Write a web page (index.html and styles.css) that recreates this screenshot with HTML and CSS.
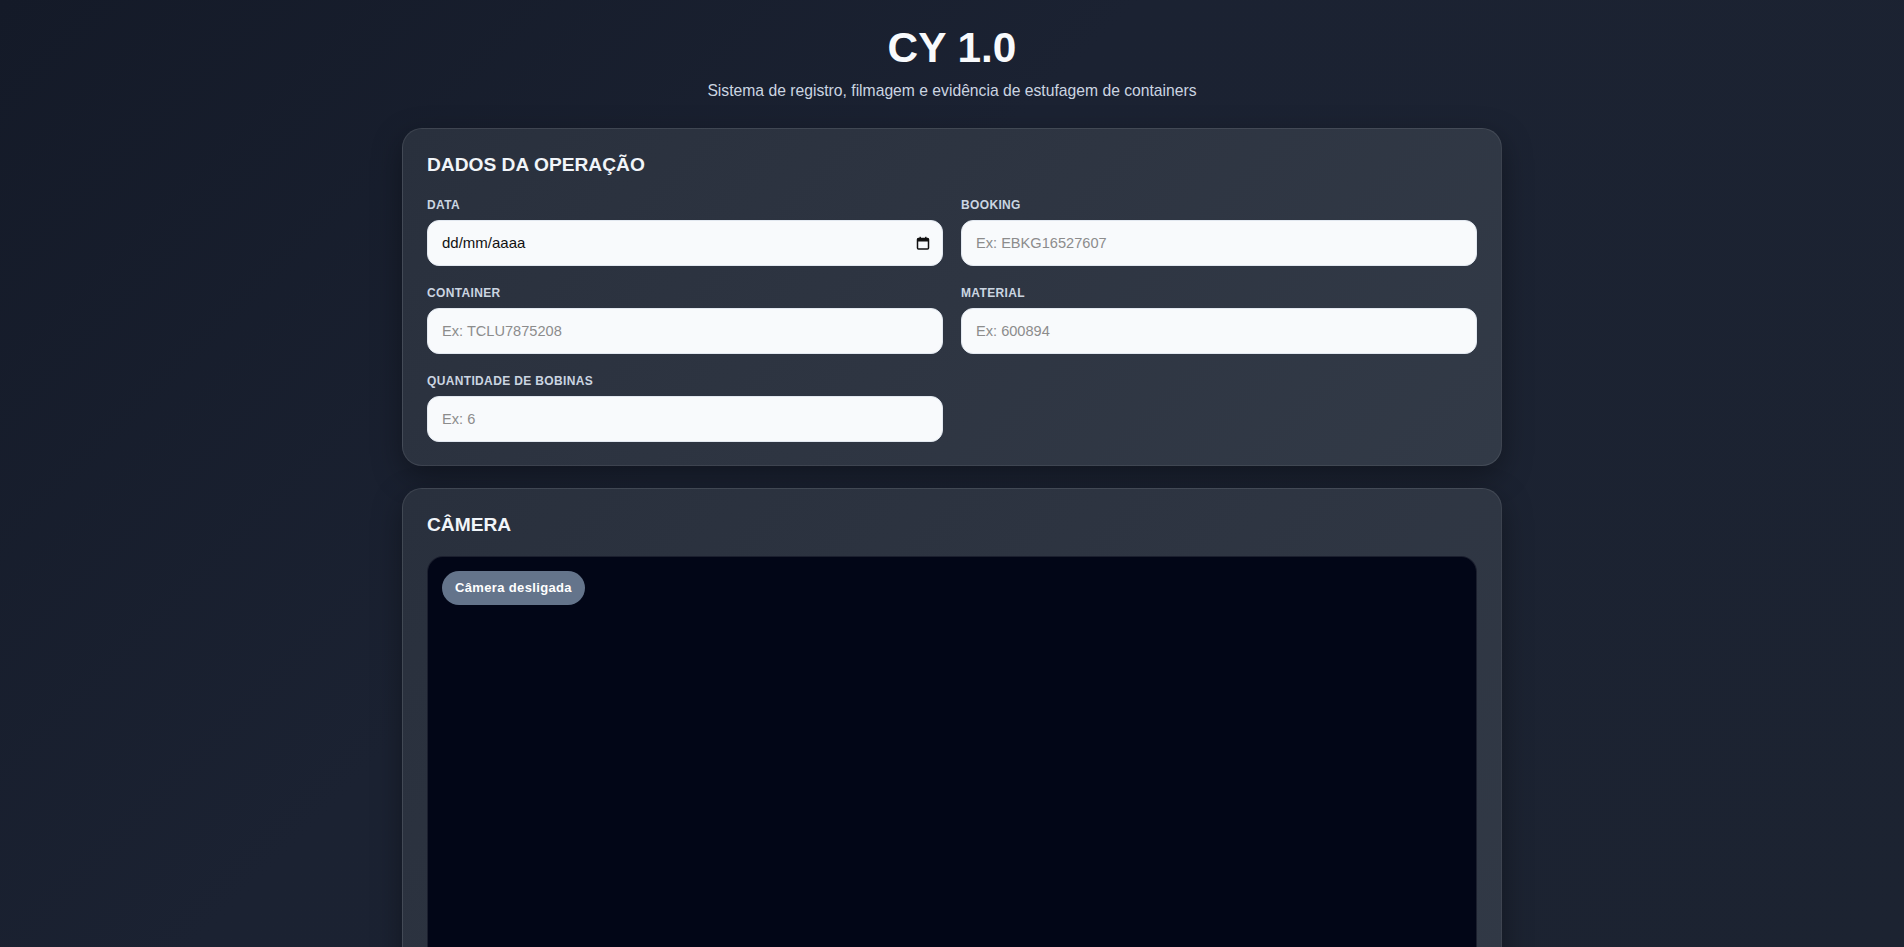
FILE: index.html
```html
<!DOCTYPE html>
<html lang="pt-BR">
<head>
<meta charset="utf-8">
<title>CY 1.0</title>
<link rel="stylesheet" href="styles.css">
</head>
<body>
<header class="header">
  <h1 class="title">CY 1.0</h1>
  <p class="subtitle">Sistema de registro, filmagem e evidência de estufagem de containers</p>
</header>
<main class="container">
  <section class="card">
    <h2 class="card-title">DADOS DA OPERAÇÃO</h2>
    <div class="form-grid">
      <div class="field">
        <label class="label">DATA</label>
        <div class="input date-input">
          <span class="date-text">dd/mm/aaaa</span>
          <svg class="cal-icon" width="14" height="14" viewBox="0 0 14 14" aria-hidden="true">
            <rect x="1.5" y="2.5" width="11" height="10.5" rx="1" fill="none" stroke="#111" stroke-width="1.5"/>
            <rect x="1.5" y="2.5" width="11" height="3" fill="#111"/>
            <rect x="3.5" y="0.8" width="1.4" height="2.5" fill="#111"/>
            <rect x="9.1" y="0.8" width="1.4" height="2.5" fill="#111"/>
          </svg>
        </div>
      </div>
      <div class="field">
        <label class="label">BOOKING</label>
        <input class="input" type="text" placeholder="Ex: EBKG16527607">
      </div>
      <div class="field">
        <label class="label">CONTAINER</label>
        <input class="input" type="text" placeholder="Ex: TCLU7875208">
      </div>
      <div class="field">
        <label class="label">MATERIAL</label>
        <input class="input" type="text" placeholder="Ex: 600894">
      </div>
      <div class="field">
        <label class="label">QUANTIDADE DE BOBINAS</label>
        <input class="input" type="text" placeholder="Ex: 6">
      </div>
    </div>
  </section>
  <section class="card">
    <h2 class="card-title">CÂMERA</h2>
    <div class="camera">
      <span class="badge">Câmera desligada</span>
    </div>
  </section>
</main>
</body>
</html>
```
FILE: styles.css
```css
* { box-sizing: border-box; }
html, body { margin: 0; padding: 0; }
body {
  font-family: "Liberation Sans", Arial, sans-serif;
  line-height: 1.5;
  color: #e5e7eb;
  min-height: 100vh;
  background: linear-gradient(135deg, #141a28 0%, #1b2232 40%, #1c2331 100%);
  background-attachment: fixed;
  padding: 23px 24px 40px;
}
.header { text-align: center; }
.title {
  margin: 0;
  font-size: 42.4px;
  line-height: 1.2;
  font-weight: 700;
  color: #f8fafc;
}
.subtitle {
  margin: 5px 0 0;
  font-size: 15.7px;
  color: #cbd5e1;
}
.container {
  max-width: 1100px;
  margin: 26px auto 0;
  display: flex;
  flex-direction: column;
  gap: 22px;
}
.card {
  border: 1px solid rgba(255,255,255,0.09);
  border-radius: 20px;
  padding: 22px 24px 23px;
  background: linear-gradient(135deg, #29303d 0%, #2e3542 50%, #323a47 100%);
  box-shadow: 0 10px 30px rgba(0,0,0,0.35);
}
.card-title {
  margin: 0 0 16px;
  font-size: 19.2px;
  font-weight: 700;
  color: #f1f5f9;
  line-height: 1.5;
}
.form-grid {
  display: grid;
  grid-template-columns: 1fr 1fr;
  gap: 18px 18px;
}
.field { display: flex; flex-direction: column; }
.label {
  font-size: 12px;
  font-weight: 700;
  letter-spacing: 0.35px;
  color: #cbd5e1;
  margin-bottom: 6px;
  line-height: 1.5;
}
.input {
  height: 46px;
  width: 100%;
  border: 1px solid #e2e8f0;
  border-radius: 12px;
  background: #f8fafc;
  padding: 0 14px;
  font-family: "Liberation Sans", Arial, sans-serif;
  font-size: 14.6px;
  color: #111;
  outline: none;
}
.input::placeholder { color: #8c8c8c; }
.date-input {
  display: flex;
  align-items: center;
  justify-content: space-between;
  padding-right: 12px;
}
.date-text { color: #111; font-size: 15px; }
.cal-icon { display: block; }
.camera {
  position: relative;
  aspect-ratio: 16 / 9;
  background: #020617;
  border: 1px solid rgba(255,255,255,0.1);
  border-radius: 16px;
  overflow: hidden;
}
.badge {
  position: absolute;
  top: 14px;
  left: 14px;
  background: #64748b;
  color: #fff;
  font-size: 13px;
  font-weight: 700;
  letter-spacing: 0.35px;
  line-height: 16px;
  padding: 9px 13px;
  border-radius: 999px;
}
```
